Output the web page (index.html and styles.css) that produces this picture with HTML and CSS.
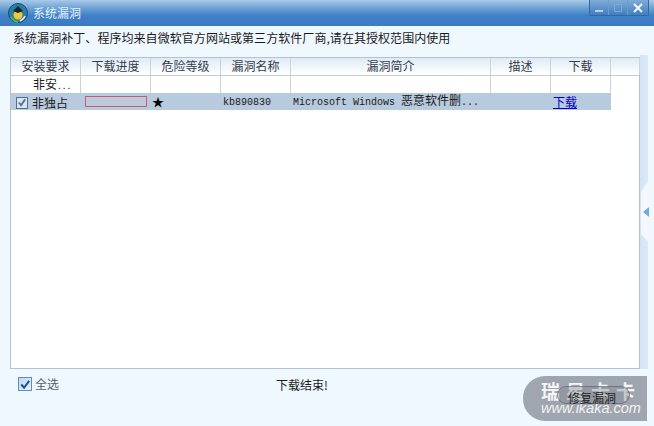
FILE: index.html
```html
<!DOCTYPE html>
<html lang="zh-CN">
<head>
  <meta charset="UTF-8" />
  <title>系统漏洞</title>
  <link rel="stylesheet" href="styles.css">
</head>
<body>
  <div class="window">
    <!-- Title bar -->
    <div class="titlebar">
      <svg class="app-icon" width="22" height="22" viewBox="0 0 22 22">
        <circle cx="11" cy="11" r="9.5" fill="#2a7f9f" stroke="#1b4a6c"/>
        <circle cx="11" cy="13" r="4.5" fill="#f0c83c"/>
        <path d="M6 9l5-5 5 5-5 2z" fill="#1b2330"/>
        <path d="M4 15c2 3 4 5 7 5" stroke="#58b848" stroke-width="2" fill="none"/>
        <path d="M13 19c2-1 4-2 5-5" stroke="#e8eef4" stroke-width="1.5" fill="none"/>
      </svg>
      <span class="title">系统漏洞</span>
      <div class="win-btns">
        <div class="win-btn"><svg width="10" height="10" viewBox="0 0 10 10"><rect x="1" y="7" width="8" height="2" fill="#b9d3ea"/></svg></div>
        <div class="win-btn"><svg width="10" height="10" viewBox="0 0 10 10"><rect x="1.5" y="1.5" width="7" height="7" fill="none" stroke="#7fa9d2"/></svg></div>
        <div class="win-btn close"><svg width="10" height="10" viewBox="0 0 10 10"><path d="M1 1l8 8M9 1l-8 8" stroke="#f2f7fc" stroke-width="2"/></svg></div>
      </div>
    </div>

    <p class="notice">系统漏洞补丁、程序均来自微软官方网站或第三方软件厂商,请在其授权范围内使用</p>

    <div class="main">
      <!-- Patch list -->
      <div class="list">
        <div class="row head">
          <div class="cell">安装要求</div>
          <div class="cell">下载进度</div>
          <div class="cell">危险等级</div>
          <div class="cell">漏洞名称</div>
          <div class="cell">漏洞简介</div>
          <div class="cell">描述</div>
          <div class="cell">下载</div>
          <div class="cell"></div>
        </div>
        <div class="row plain">
          <div class="cell indent">非安<span class="dots">...</span></div>
          <div class="cell"></div>
          <div class="cell"></div>
          <div class="cell"></div>
          <div class="cell"></div>
          <div class="cell"></div>
          <div class="cell"></div>
        </div>
        <div class="row selected">
          <div class="cell check-cell">
            <span class="row-check"><svg width="11" height="11" viewBox="0 0 11 11"><path d="M2 5.5l2.5 3L9 2" stroke="#54708c" stroke-width="2" fill="none"/></svg></span>
            <span>非独占</span>
          </div>
          <div class="cell"><span class="progress"></span></div>
          <div class="cell star">★</div>
          <div class="cell left mono">kb890830</div>
          <div class="cell left mono">Microsoft Windows <span class="cjk">恶意软件删</span>...</div>
          <div class="cell"></div>
          <div class="cell left"><a class="dl-link" href="#">下载</a></div>
        </div>
      </div>
      <div class="side-strip">
        <div class="handle"><span class="arrow"></span></div>
      </div>
    </div>

    <div class="footer">
      <label class="select-all">
        <span class="all-check"><svg width="13" height="13" viewBox="0 0 13 13"><path d="M2.5 6.5l3 3.5L11 2.5" stroke="#1c4f96" stroke-width="2.2" fill="none"/></svg></span>
        全选
      </label>
      <span class="status">下载结束!</span>
    </div>

    <div class="watermark">
      <div class="wm-name">瑞星卡卡</div>
      <div class="wm-url">www.ikaka.com</div>
    </div>
    <span class="fix-btn">修复漏洞</span>
  </div>
</body>
</html>
```

FILE: styles.css
```css
* {
  margin: 0;
  padding: 0;
  box-sizing: border-box;
}
html,
body {
  width: 654px;
  height: 426px;
  overflow: hidden;
}
body {
  font-family: "Noto Sans CJK SC", "Liberation Sans", sans-serif;
  font-size: 12px;
  color: #1a1a1a;
}
.window {
  position: relative;
  width: 654px;
  height: 426px;
  background: #eff7ff;
  display: flex;
  flex-direction: column;
}

/* Title bar */
.titlebar {
  height: 26px;
  flex: none;
  display: flex;
  align-items: center;
  padding-left: 7px;
  background: linear-gradient(#a9c9e6 0, #6ea4d6 30%, #3f80c8 60%, #3a7bc4 100%);
}
.app-icon {
  flex: none;
}
.title {
  margin-left: 4px;
  color: #e8f2fb;
  line-height: 20px;
}
.win-btns {
  margin-left: auto;
  margin-right: 5px;
  align-self: flex-start;
  display: flex;
  height: 16px;
  border: 1px solid #35689e;
  border-top: none;
  border-radius: 0 0 2px 2px;
}
.win-btn {
  width: 19px;
  display: flex;
  align-items: center;
  justify-content: center;
  background: linear-gradient(#80abd6, #3f7fc2);
  border-right: 1px solid #6d9cc9;
}
.win-btn.close {
  width: 20px;
  border-right: none;
}

.notice {
  height: 31px;
  flex: none;
  padding-left: 13px;
  line-height: 24px;
  letter-spacing: 0.055px;
}

/* List */
.main {
  height: 312px;
  flex: none;
  display: flex;
  padding-left: 10px;
}
.list {
  width: 630px;
  background: #fff;
  border: 1px solid #b4c3d3;
}
.row {
  display: grid;
  grid-template-columns: 70px 70px 70px 70px 200px 60px 60px 29px;
  text-align: center;
}
.cell {
  border-right: 1px solid #ccd2d8;
  white-space: nowrap;
  overflow: hidden;
}
.head {
  height: 18px;
  line-height: 16px;
  color: #33404d;
  background: linear-gradient(#dfeaf5, #fdfeff 90%);
  border-bottom: 1px solid #c8ccd0;
}
.plain {
  height: 17px;
  line-height: 16px;
  grid-template-columns: 70px 70px 70px 70px 200px 60px 60px;
}
.plain .indent {
  text-align: left;
  padding-left: 22px;
}
.dots {
  font-size: 10px;
  letter-spacing: 2px;
  margin-left: 1px;
}
.selected {
  height: 17px;
  line-height: 17px;
  width: 600px;
  grid-template-columns: 70px 70px 70px 70px 200px 60px 60px;
  background: #b7cade;
}
.selected .cell {
  border-right: none;
}
.left {
  text-align: left;
  padding-left: 2px;
}
.mono {
  font-family: "Liberation Mono", "Noto Sans CJK SC", monospace;
  font-size: 10px;
  line-height: 19px;
  overflow: visible;
}
.cjk {
  font-family: "Noto Sans CJK SC", sans-serif;
  font-size: 12px;
  line-height: 1;
}
.check-cell {
  display: flex;
  align-items: center;
  padding-left: 5px;
  gap: 4px;
}
.row-check {
  width: 12px;
  height: 12px;
  flex: none;
  display: flex;
  align-items: center;
  justify-content: center;
  background: #d9e4ef;
  border: 1px solid #54708c;
}
.progress {
  display: block;
  width: 62px;
  height: 11px;
  margin: 3px 0 0 4px;
  border: 1px solid #c85a78;
  background: #bccadb;
}
.star {
  text-align: left;
  padding-left: 1px;
  font-size: 12px;
  line-height: 17px;
  color: #000;
}
.dl-link {
  color: #0000cc;
  text-decoration: underline;
}

/* Right side strip and its collapse handle */
.side-strip {
  position: relative;
  width: 8px;
  margin-top: -2px;
  background: linear-gradient(90deg, #d3e4f7, #dbe9f9);
}
.handle {
  position: absolute;
  left: 1px;
  top: 125px;
  width: 8px;
  height: 63px;
  background: #f4f8fd;
  clip-path: polygon(0 12px, 100% 0, 100% 100%, 0 54px);
}
.arrow {
  position: absolute;
  left: 2px;
  top: 27px;
  border-style: solid;
  border-width: 5px 6px 5px 0;
  border-color: transparent #6eaadf transparent transparent;
}

/* Footer */
.footer {
  flex: 1;
  display: flex;
  align-items: flex-start;
  padding: 7px 0 0 18px;
}
.select-all {
  display: flex;
  align-items: center;
  gap: 3px;
  width: 258px;
  color: #52626f;
  line-height: 16px;
}
.all-check {
  width: 14px;
  height: 14px;
  flex: none;
  display: flex;
  align-items: center;
  justify-content: center;
  background: linear-gradient(135deg, #bcd6f2, #eaf3fc);
  border: 1px solid #5f8fc0;
}
.status {
  line-height: 16px;
  margin-top: 1px;
}

/* Site watermark, stamped over the corner; the button shows through it */
.watermark {
  position: absolute;
  right: 7px;
  bottom: 5px;
  width: 124px;
  height: 45px;
  border-radius: 22px 0 0 22px;
  background: rgba(105, 112, 122, 0.6);
  color: #fff;
  padding: 5px 0 0 18px;
  overflow: hidden;
}
.wm-name {
  font-size: 19px;
  font-weight: 700;
  line-height: 20px;
  letter-spacing: 6px;
  white-space: nowrap;
  opacity: 0.9;
}
.wm-url {
  font-family: "Liberation Sans", sans-serif;
  font-style: italic;
  font-size: 14.5px;
  line-height: 15px;
  opacity: 0.85;
}
.fix-btn {
  position: absolute;
  left: 557px;
  top: 386px;
  width: 73px;
  height: 18px;
  padding-right: 3px;
  border-radius: 9px;
  border: 1px solid rgba(90, 96, 104, 0.6);
  background: rgba(130, 136, 144, 0.4);
  text-align: center;
  color: #222;
  line-height: 22px;
}
```
